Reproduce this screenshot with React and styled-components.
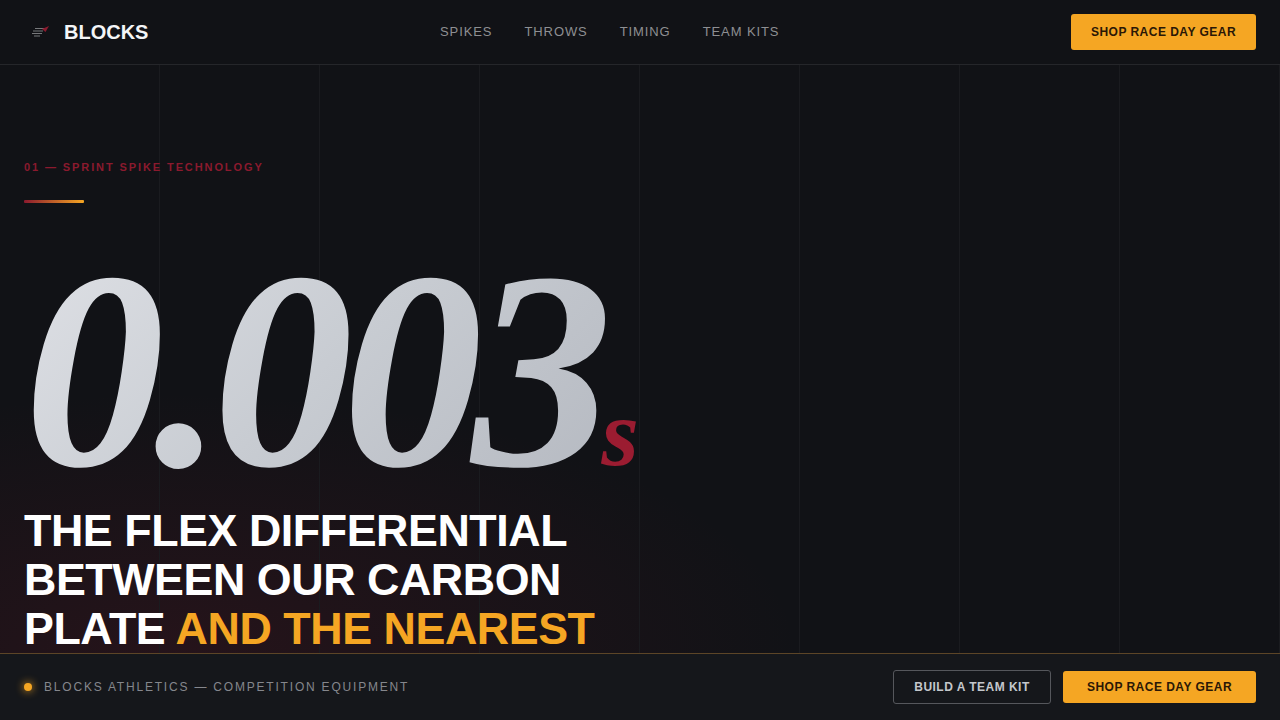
import React from 'react';
import styled, { createGlobalStyle } from 'styled-components';

const GlobalStyle = createGlobalStyle`
  html, body {
    margin: 0;
    padding: 0;
    background: #111216;
  }
  * {
    box-sizing: border-box;
  }
`;

const Page = styled.div`
  width: 1280px;
  height: 720px;
  display: flex;
  flex-direction: column;
  overflow: hidden;
  background: #111216;
  font-family: 'Liberation Sans', Arial, sans-serif;
`;

const Nav = styled.header`
  height: 65px;
  flex: none;
  display: flex;
  align-items: center;
  justify-content: space-between;
  padding: 0 24px;
  background: #111216;
  border-bottom: 1px solid #25262a;
`;

const Brand = styled.div`
  display: flex;
  align-items: center;
  gap: 10px;
  font-size: 20px;
  font-weight: 700;
  color: #f4f5f7;
`;

const NavLinks = styled.nav`
  display: flex;
  gap: 32px;
  margin-top: -2px;
`;

const NavLink = styled.a`
  font-size: 13px;
  letter-spacing: 0.91px;
  color: #8e8f92;
`;

const Button = styled.a`
  display: flex;
  align-items: center;
  justify-content: center;
  width: ${(p) => p.$width}px;
  height: ${(p) => p.$height}px;
  border-radius: 3px;
  font-size: 12px;
  font-weight: 700;
  letter-spacing: 0.48px;
  color: ${(p) => (p.$ghost ? '#c4c7cc' : '#2a1706')};
  background: ${(p) => (p.$ghost ? 'transparent' : '#f5a623')};
  border: ${(p) => (p.$ghost ? '1px solid #55575c' : 'none')};
`;

const Hero = styled.main`
  position: relative;
  flex: 1;
  min-height: 0;
  overflow: hidden;
  padding: 96px 24px 0;
  background:
    radial-gradient(ellipse 620px 260px at 180px 100%, rgba(139, 26, 46, 0.17), transparent 100%),
    #111216;
`;

const GridLines = styled.div`
  position: absolute;
  inset: 0;
  background: repeating-linear-gradient(
    90deg,
    transparent 0,
    transparent 159px,
    #1a1b1f 159px,
    #1a1b1f 160px
  );
`;

const Content = styled.div`
  position: relative;
`;

const Eyebrow = styled.div`
  font-size: 11px;
  line-height: 13px;
  font-weight: 700;
  letter-spacing: 1.9px;
  color: #8b1a2e;
`;

const Rule = styled.div`
  width: 60px;
  height: 3px;
  margin-top: 26px;
  border-radius: 1px;
  background: linear-gradient(90deg, #8b1a2e, #f5a623);
`;

const Stat = styled.div`
  margin-top: 27px;
  display: flex;
  align-items: baseline;
  height: 276px;
  line-height: 280px;
  font-family: 'Liberation Serif', 'Times New Roman', serif;
  font-style: italic;
  font-weight: 700;
`;

const Digits = styled.span`
  font-size: 281.6px;
  letter-spacing: -0.04em;
  padding-right: 0.04em;
  background: linear-gradient(135deg, #dfe1e6, #c8ccd2 50%, #b4b8c0);
  -webkit-background-clip: text;
  background-clip: text;
  color: transparent;
`;

const Unit = styled.span`
  font-size: 96px;
  color: #9b1c31;
  margin-left: -11px;
`;

const Headline = styled.h1`
  margin: 0;
  width: 620px;
  font-size: 44.8px;
  line-height: 49px;
  font-weight: 700;
  letter-spacing: -0.01em;
  color: #ffffff;
`;

const Accent = styled.span`
  color: #f5a623;
`;

const Footer = styled.footer`
  height: 67px;
  flex: none;
  display: flex;
  align-items: center;
  justify-content: space-between;
  padding: 0 24px;
  background: #15171b;
  border-top: 1px solid #5c4527;
`;

const Status = styled.div`
  display: flex;
  align-items: center;
  gap: 12px;
  font-size: 12px;
  letter-spacing: 1.8px;
  color: #85878d;
`;

const Dot = styled.span`
  width: 8px;
  height: 8px;
  border-radius: 50%;
  background: #f5a623;
  box-shadow: 0 0 8px #f5a623;
`;

const Actions = styled.div`
  display: flex;
  align-items: center;
  gap: 12px;
`;

function Logo() {
  return (
    <svg width="30" height="20" viewBox="0 0 30 20" fill="none">
      <path d="M11 6.5h10M9 9h10M8 11.5h10M10 14h6" stroke="#77787b" strokeWidth="1.2" />
      <path d="M18 7l7-3-3.5 6z" fill="#8b1a2e" />
    </svg>
  );
}

export default function App() {
  return (
    <Page>
      <GlobalStyle />
      <Nav>
        <Brand>
          <Logo />
          BLOCKS
        </Brand>
        <NavLinks>
          <NavLink>SPIKES</NavLink>
          <NavLink>THROWS</NavLink>
          <NavLink>TIMING</NavLink>
          <NavLink>TEAM KITS</NavLink>
        </NavLinks>
        <Button $width={185} $height={36}>SHOP RACE DAY GEAR</Button>
      </Nav>
      <Hero>
        <GridLines />
        <Content>
          <Eyebrow>01 — SPRINT SPIKE TECHNOLOGY</Eyebrow>
          <Rule />
          <Stat>
            <Digits>0.003</Digits>
            <Unit>s</Unit>
          </Stat>
          <Headline>
            THE FLEX DIFFERENTIAL BETWEEN OUR CARBON PLATE <Accent>AND THE NEAREST COMPETITOR</Accent>
          </Headline>
        </Content>
      </Hero>
      <Footer>
        <Status>
          <Dot />
          BLOCKS ATHLETICS — COMPETITION EQUIPMENT
        </Status>
        <Actions>
          <Button $ghost $width={158} $height={34}>BUILD A TEAM KIT</Button>
          <Button $width={193} $height={32}>SHOP RACE DAY GEAR</Button>
        </Actions>
      </Footer>
    </Page>
  );
}
